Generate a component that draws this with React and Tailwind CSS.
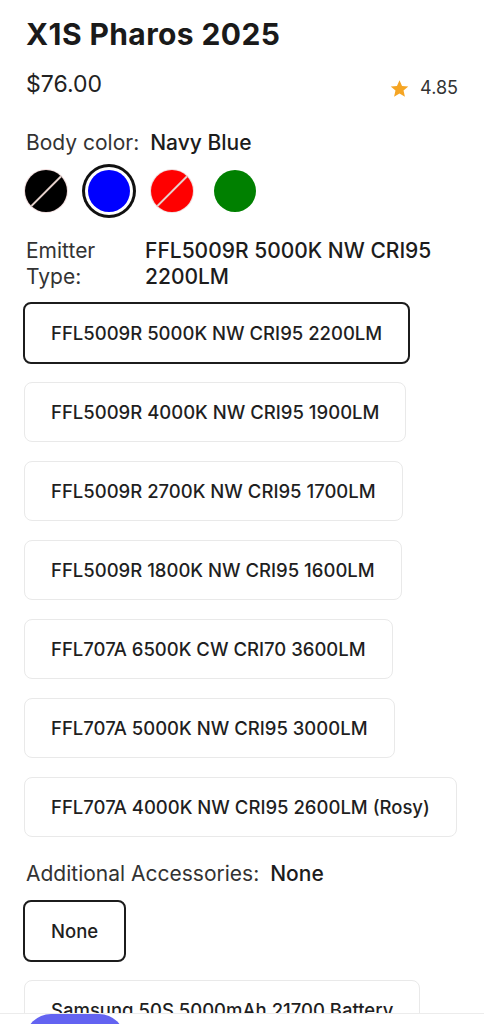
import { useState } from "react";

const colors = [
  { name: "Black", hex: "#000000", soldOut: true },
  { name: "Navy Blue", hex: "#0000ff", soldOut: false },
  { name: "Red", hex: "#ff0000", soldOut: true },
  { name: "Green", hex: "#008000", soldOut: false },
];

const emitters = [
  "FFL5009R 5000K NW CRI95 2200LM",
  "FFL5009R 4000K NW CRI95 1900LM",
  "FFL5009R 2700K NW CRI95 1700LM",
  "FFL5009R 1800K NW CRI95 1600LM",
  "FFL707A 6500K CW CRI70 3600LM",
  "FFL707A 5000K NW CRI95 3000LM",
  "FFL707A 4000K NW CRI95 2600LM (Rosy)",
];

const accessories = ["None", "Samsung 50S 5000mAh 21700 Battery", "Magnetic Charging Cable"];

function OptionButton({ label, selected, onClick }) {
  return (
    <button
      onClick={onClick}
      className={`self-start rounded-lg bg-white px-[26px] py-[17px] text-left text-[18.5px] font-medium leading-6 text-[#1f1f1f] ${
        selected
          ? "-mx-px -my-px border-2 border-[#1c1c1c]"
          : "border border-[#e9e9e9]"
      }`}
    >
      {label}
    </button>
  );
}

export default function App() {
  const [color, setColor] = useState("Navy Blue");
  const [emitter, setEmitter] = useState(emitters[0]);
  const [accessory, setAccessory] = useState("None");

  return (
    <div className="min-h-screen bg-white font-['Inter','Noto_Sans',sans-serif] text-[#1c1c1c]">
      <div className="px-6 pt-4 pb-32">
        {/* Title */}
        <h1 className="pl-[2px] text-[30px] font-bold leading-9 tracking-[0.4px] text-[#1a1a1a]">
          X1S Pharos 2025
        </h1>

        {/* Price + rating */}
        <div className="mt-[17px] flex items-start justify-between pl-[2px]">
          <span className="text-[23px] leading-[30px] text-[#222]">$76.00</span>
          <div className="mt-[7px] flex items-center gap-[10px] pr-[2px]">
            <svg width="21" height="21" viewBox="0 0 24 24" className="text-[#f5a524]">
              <path
                fill="currentColor"
                d="M12 2.5l2.9 6.6 7.1.6-5.4 4.7 1.6 7-6.2-3.7-6.2 3.7 1.6-7L2 9.7l7.1-.6z"
              />
            </svg>
            <span className="text-[18px] leading-6 text-[#333]">4.85</span>
          </div>
        </div>

        {/* Body color */}
        <div className="mt-[29px] flex items-center gap-[11px] pl-[2px] text-[21px] leading-7">
          <span className="text-[#333]">Body color:</span>
          <span className="font-medium text-[#1c1c1c]">{color}</span>
        </div>
        <div className="mt-[13px] flex gap-[21px] pl-[1px]">
          {colors.map((c) => (
            <button
              key={c.name}
              onClick={() => setColor(c.name)}
              className={`relative h-[42px] w-[42px] overflow-hidden rounded-full ${
                color === c.name
                  ? "shadow-[0_0_0_3px_#fff,0_0_0_6px_#111]"
                  : c.soldOut
                  ? "shadow-[0_0_0_1px_#f0dcdc]"
                  : ""
              }`}
              style={{ backgroundColor: c.hex }}
              aria-label={c.name}
            >
              {c.soldOut && (
                <span className="absolute left-1/2 top-1/2 h-[1.5px] w-[60px] -translate-x-1/2 -translate-y-1/2 -rotate-45 bg-[#e6d2cc]" />
              )}
            </button>
          ))}
        </div>

        {/* Emitter */}
        <div className="mt-[26px] flex pl-[2px] text-[21px] leading-[26px]">
          <span className="w-[119px] shrink-0 pr-4 text-[#333]">Emitter Type:</span>
          <span className="font-medium text-[#1c1c1c]">{emitter}</span>
        </div>
        <div className="mt-[13px] flex flex-col gap-[19px]">
          {emitters.map((e) => (
            <OptionButton
              key={e}
              label={e}
              selected={emitter === e}
              onClick={() => setEmitter(e)}
            />
          ))}
        </div>

        {/* Accessories */}
        <div className="mt-[23px] flex items-center gap-[11px] pl-[2px] text-[21px] leading-7">
          <span className="text-[#333]">Additional Accessories:</span>
          <span className="font-medium text-[#1c1c1c]">{accessory}</span>
        </div>
        <div className="mt-[13px] flex flex-col gap-[19px]">
          {accessories.map((a) => (
            <OptionButton
              key={a}
              label={a}
              selected={accessory === a}
              onClick={() => setAccessory(a)}
            />
          ))}
        </div>
      </div>

      {/* Bottom action bar */}
      <div className="fixed inset-x-0 top-[1013px] h-[80px] border-t border-[#ececec] bg-white px-[25px]">
        <button className="h-[52px] w-[100px] rounded-full bg-[#6363f1] text-[17px] font-semibold text-white">
          Add
        </button>
      </div>
    </div>
  );
}
